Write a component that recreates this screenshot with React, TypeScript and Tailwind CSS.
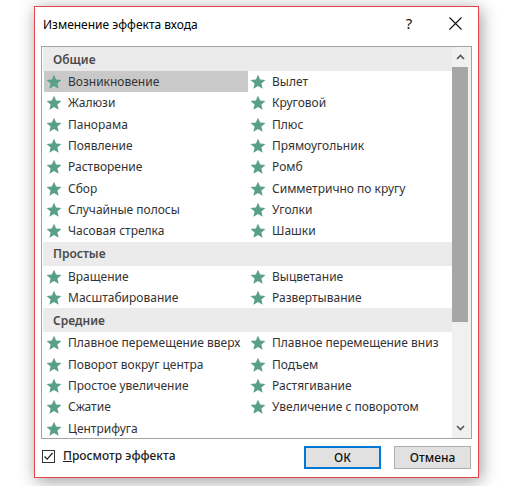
import React from "react";

const Star = () => (
  <svg width="16" height="16" viewBox="0 0 24 24" className="shrink-0">
    <path
      d="M12 1l3.2 7.4 8 .7-6.1 5.3 1.9 7.9L12 18.1l-7 4.2 1.9-7.9L.8 9.1l8-.7z"
      fill="#58a08a"
    />
  </svg>
);

type Group = { title: string; items: string[] };

const groups: Group[] = [
  {
    title: "Общие",
    items: [
      "Возникновение",
      "Вылет",
      "Жалюзи",
      "Круговой",
      "Панорама",
      "Плюс",
      "Появление",
      "Прямоугольник",
      "Растворение",
      "Ромб",
      "Сбор",
      "Симметрично по кругу",
      "Случайные полосы",
      "Уголки",
      "Часовая стрелка",
      "Шашки",
    ],
  },
  {
    title: "Простые",
    items: ["Вращение", "Выцветание", "Масштабирование", "Развертывание"],
  },
  {
    title: "Средние",
    items: [
      "Плавное перемещение вверх",
      "Плавное перемещение вниз",
      "Поворот вокруг центра",
      "Подъем",
      "Простое увеличение",
      "Растягивание",
      "Сжатие",
      "Увеличение с поворотом",
      "Центрифуга",
    ],
  },
];

export default function App() {
  return (
    <div
      className="w-[513px] h-[486px] bg-white overflow-hidden pt-[6px] pl-[34px]"
      style={{ fontFamily: '"Noto Sans", "Open Sans", sans-serif' }}
    >
      <div className="w-[445px] h-[472px] border border-[#e6434f] bg-white flex flex-col shadow-[2px_3px_16px_rgba(0,0,0,0.4)]">
        {/* Title bar */}
        <div className="h-[39px] flex items-center shrink-0">
          <div className="pl-[8px] pb-[4px] text-[12px] text-black flex-1">
            Изменение эффекта входа
          </div>
          <div className="w-[46px] h-[32px] flex items-center justify-center text-[15px] text-[#111] pb-[6px]">
            ?
          </div>
          <div className="w-[46px] h-[32px] flex items-center justify-center pb-[6px]">
            <svg width="13" height="13" viewBox="0 0 13 13">
              <path d="M0.5 0.5L12.5 12.5M12.5 0.5L0.5 12.5" stroke="#111" strokeWidth="1.1" />
            </svg>
          </div>
        </div>

        {/* List box */}
        <div className="mx-[6px] h-[393px] border border-[#a3a3a3] flex shrink-0 overflow-hidden">
          <div className="w-[410px] overflow-hidden">
            {groups.map((g) => (
              <div key={g.title}>
                <div className="h-[24px] bg-[#ebebeb] ml-[1px] pl-[10px] pt-[1px] flex items-center text-[12px] font-semibold text-[#4a4a4a]">
                  {g.title}
                </div>
                <div className="grid grid-cols-[204px_204px] pl-[2px]">
                  {g.items.map((it, i) => (
                    <div
                      key={it}
                      className={
                        "h-[21.33px] flex items-center pl-[2px] pt-[1px] gap-[6px] text-[12px] text-[#333] whitespace-nowrap " +
                        (g.title === "Общие" && i === 0 ? "bg-[#c9c9c9]" : "")
                      }
                    >
                      <Star />
                      <span>{it}</span>
                    </div>
                  ))}
                </div>
              </div>
            ))}
          </div>
          {/* Scrollbar */}
          <div className="w-[19px] bg-[#f0f0f0] flex flex-col">
            <div className="h-[20px] flex items-center justify-center pr-[2px]">
              <svg width="9" height="6" viewBox="0 0 9 6">
                <path d="M1 5L4.5 1.5L8 5" stroke="#555" strokeWidth="1.6" fill="none" />
              </svg>
            </div>
            <div className="h-[255px] w-[16px] bg-[#a6a6a6]" />
            <div className="flex-1" />
            <div className="h-[20px] flex items-center justify-center pr-[2px]">
              <svg width="9" height="6" viewBox="0 0 9 6">
                <path d="M1 1L4.5 4.5L8 1" stroke="#555" strokeWidth="1.6" fill="none" />
              </svg>
            </div>
          </div>
        </div>

        {/* Bottom */}
        <div className="flex-1 flex items-start pl-[7px] pr-[7px]">
          <div className="flex items-center mt-[8px] gap-[8px]">
            <div className="w-[13px] h-[13px] border border-[#333] bg-white flex items-center justify-center">
              <svg width="11" height="11" viewBox="0 0 11 11">
                <path d="M1.5 5.5L4.2 8.2L9.5 2" stroke="#222" strokeWidth="1.2" fill="none" />
              </svg>
            </div>
            <span className="text-[12px] text-[#222] font-medium">
              <span className="underline">П</span>росмотр эффекта
            </span>
          </div>
          <div className="flex-1" />
          <div className="flex gap-[13px] mt-[7px]">
            <div className="w-[77px] h-[23px] bg-[#e1e1e1] border-2 border-[#0078d7] flex items-center justify-center text-[12px] text-[#111] font-medium">
              ОК
            </div>
            <div className="w-[77px] h-[23px] bg-[#e1e1e1] border border-[#adadad] flex items-center justify-center text-[12px] text-[#111] font-medium">
              Отмена
            </div>
          </div>
        </div>
      </div>
    </div>
  );
}
